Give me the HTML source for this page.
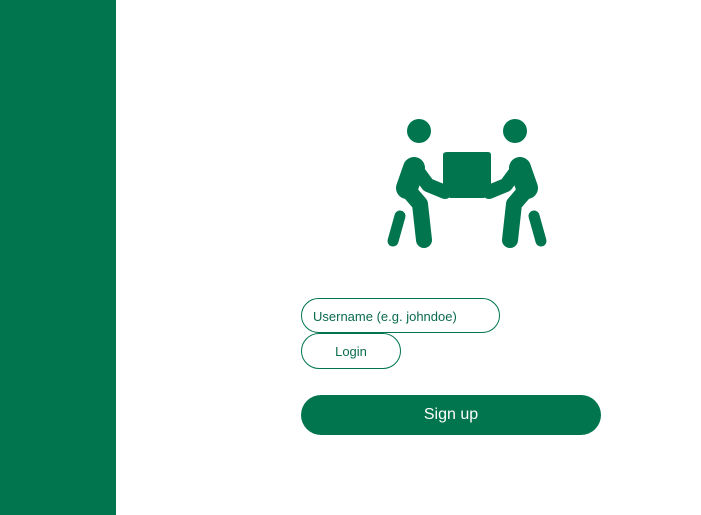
<!DOCTYPE html>
<html><head><style>
body{margin:0;width:701px;height:515px;background:#fff;position:relative;font-family:"Liberation Sans",sans-serif;overflow:hidden}
.side{position:absolute;left:0;top:0;width:116px;height:515px;background:#00754e}
.in{position:absolute;left:301px;top:298px;width:199px;height:35px;border:1px solid #00754e;border-radius:18px;box-sizing:border-box;font-size:13px;color:#0a6a4e;padding:10px 0 0 11px}
.lg{position:absolute;left:301px;top:333px;width:100px;height:36px;border:1px solid #00754e;border-radius:18px;box-sizing:border-box;font-size:13px;color:#0a6a4e;text-align:center;line-height:35px}
.su{position:absolute;left:301px;top:395px;width:300px;height:40px;background:#00754e;border-radius:20px;color:#fff;font-size:16px;text-align:center;line-height:40px}
</style></head><body>
<div class="side"></div>
<svg style="position:absolute;left:0;top:0" width="701" height="515">
<g fill="#00754e" stroke="#00754e" stroke-linecap="round" stroke-linejoin="round">
<circle cx="419" cy="131" r="12" stroke="none"/>
<circle cx="515" cy="131" r="12" stroke="none"/>
<path d="M447 152 H488 Q491 152 491 155 V190 L484 198 H450 L443 190 V155 Q443 152 447 152Z" stroke="none"/>
<path d="M414 168 L407 188" fill="none" stroke-width="22"/>
<path d="M408 190 L420 204 L424 240" fill="none" stroke-width="16"/>
<path d="M414 166 L428 185 L445 192" fill="none" stroke-width="14"/>
<path d="M520 168 L527 188" fill="none" stroke-width="22"/>
<path d="M526 190 L514 204 L510 240" fill="none" stroke-width="16"/>
<path d="M520 166 L506 185 L489 192" fill="none" stroke-width="14"/>
<path d="M400 216 L393 241" fill="none" stroke-width="11"/>
<path d="M534 216 L541 241" fill="none" stroke-width="11"/>
</g></svg>
<div class="in">Username (e.g. johndoe)</div>
<div class="lg">Login</div>
<div class="su">Sign up</div>
</body></html>
